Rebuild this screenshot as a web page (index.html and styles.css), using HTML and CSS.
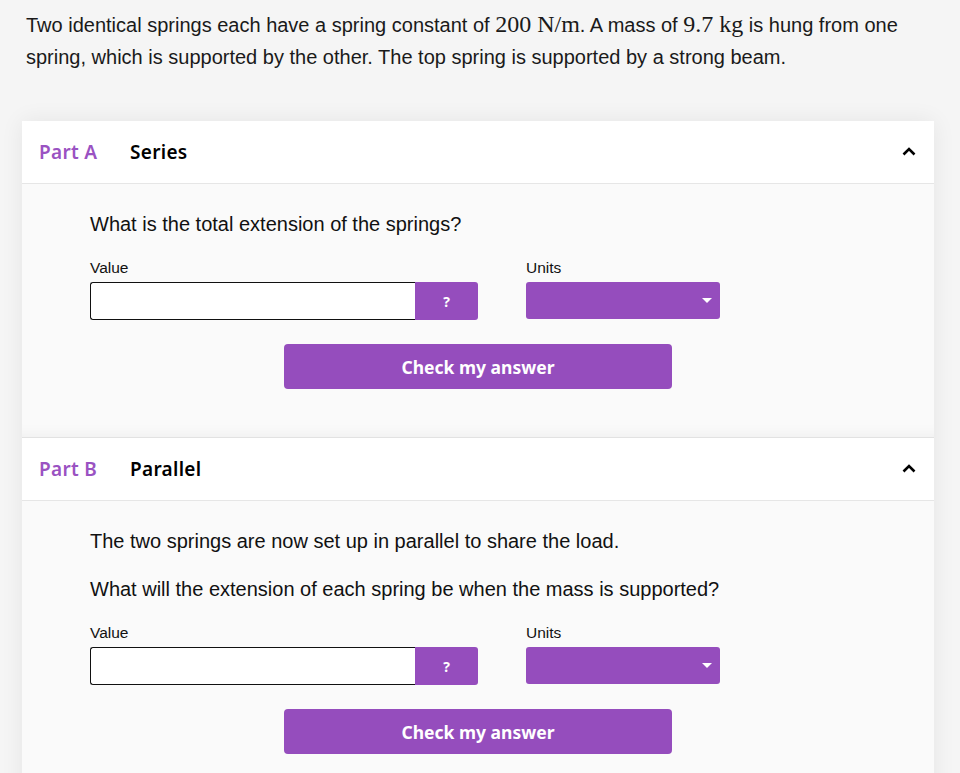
FILE: index.html
```html
<!DOCTYPE html>
<html lang="en">
<head>
<meta charset="utf-8">
<title>Springs</title>
<link rel="stylesheet" href="styles.css">
</head>
<body>
<div class="page">
  <p class="intro">Two identical springs each have a spring constant of <span class="math">200 N/m</span>. A mass of <span class="math">9.7 kg</span> is hung from one spring, which is supported by the other. The top spring is supported by a strong beam.</p>

  <div class="card">
    <section class="part">
      <header class="part-head">
        <span class="part-label">Part A</span>
        <span class="part-title">Series</span>
        <svg class="chev" width="14" height="9" viewBox="0 0 14 9"><polyline points="1.5,7.5 7,2 12.5,7.5" fill="none" stroke="#000" stroke-width="2.6"/></svg>
      </header>
      <div class="part-body">
        <p class="q">What is the total extension of the springs?</p>
        <div class="fields">
          <div class="field value-field">
            <label class="lbl">Value</label>
            <div class="input-row">
              <div class="input"></div>
              <button class="help">?</button>
            </div>
          </div>
          <div class="field units-field">
            <label class="lbl">Units</label>
            <div class="select"><span class="tri"></span></div>
          </div>
        </div>
        <button class="check">Check my answer</button>
      </div>
    </section>

    <section class="part">
      <header class="part-head">
        <span class="part-label">Part B</span>
        <span class="part-title">Parallel</span>
        <svg class="chev" width="14" height="9" viewBox="0 0 14 9"><polyline points="1.5,7.5 7,2 12.5,7.5" fill="none" stroke="#000" stroke-width="2.6"/></svg>
      </header>
      <div class="part-body">
        <p class="q">The two springs are now set up in parallel to share the load.</p>
        <p class="q">What will the extension of each spring be when the mass is supported?</p>
        <div class="fields">
          <div class="field value-field">
            <label class="lbl">Value</label>
            <div class="input-row">
              <div class="input"></div>
              <button class="help">?</button>
            </div>
          </div>
          <div class="field units-field">
            <label class="lbl">Units</label>
            <div class="select"><span class="tri"></span></div>
          </div>
        </div>
        <button class="check">Check my answer</button>
      </div>
    </section>
  </div>
</div>
</body>
</html>
```

FILE: styles.css
```css
html, body {
  margin: 0;
  padding: 0;
  background: #f5f5f5;
}
body {
  font-family: "Liberation Sans", Arial, sans-serif;
  color: #1a1a1a;
}
.page {
  padding: 0 26px 0 22px;
}
.intro {
  margin: 8px 0 48px;
  padding-left: 4px;
  font-size: 20px;
  line-height: 32px;
}
.math {
  font-family: "Liberation Serif", "DejaVu Serif", serif;
  font-size: 1.2em;
}
.card {
  background: #fff;
  box-shadow: 0 0 22px rgba(0, 0, 0, 0.07);
}
.part + .part {
  border-top: 1px solid #e2e2e2;
}
.part-head {
  height: 62px;
  display: flex;
  align-items: center;
  padding: 0 18px 0 17px;
  border-bottom: 1px solid #e6e6e6;
  background: #fff;
  font-family: "Noto Sans", "Open Sans", sans-serif;
  font-weight: 600;
  font-size: 19px;
  letter-spacing: 0.3px;
}
.part-label {
  color: #9a52c2;
  width: 91px;
}
.part-title {
  color: #000;
  flex: 1;
}
.chev {
  display: block;
  margin-top: -2px;
}
.part-body {
  background: #fafafa;
  padding: 27px 68px 48px;
  box-shadow: inset 0 -14px 14px -12px rgba(0, 0, 0, 0.05);
}
.q {
  margin: 0 0 22px;
  font-size: 20px;
  line-height: 26px;
  color: #111;
}
.q:last-of-type {
  margin-bottom: 21px;
}
.fields {
  display: flex;
  gap: 48px;
}
.field {
  display: flex;
  flex-direction: column;
  gap: 4px;
}
.value-field {
  width: 388px;
}
.lbl {
  font-size: 15.5px;
  line-height: 20px;
  color: #111;
}
.input-row {
  display: flex;
  height: 38px;
}
.input {
  flex: 1;
  background: #fff;
  border: 1px solid #111;
  border-right: none;
  border-radius: 3px 0 0 3px;
}
.help {
  width: 63px;
  border: none;
  margin: 0;
  padding: 0;
  background: #954dbd;
  color: #fff;
  border-radius: 0 3px 3px 0;
  font-family: "Noto Sans", sans-serif;
  font-weight: 700;
  font-size: 14px;
}
.select {
  width: 194px;
  height: 37px;
  background: #954dbd;
  border-radius: 3px;
  display: flex;
  align-items: center;
  justify-content: flex-end;
  padding-right: 8px;
  box-sizing: border-box;
}
.tri {
  width: 0;
  height: 0;
  border-left: 5px solid transparent;
  border-right: 5px solid transparent;
  border-top: 5px solid #fff;
}
.check {
  display: block;
  margin: 24px auto 0;
  width: 388px;
  height: 45px;
  border: none;
  border-radius: 4px;
  background: #954dbd;
  color: #fff;
  font-family: "Noto Sans", "Open Sans", sans-serif;
  font-weight: 700;
  font-size: 17.5px;
}
```
